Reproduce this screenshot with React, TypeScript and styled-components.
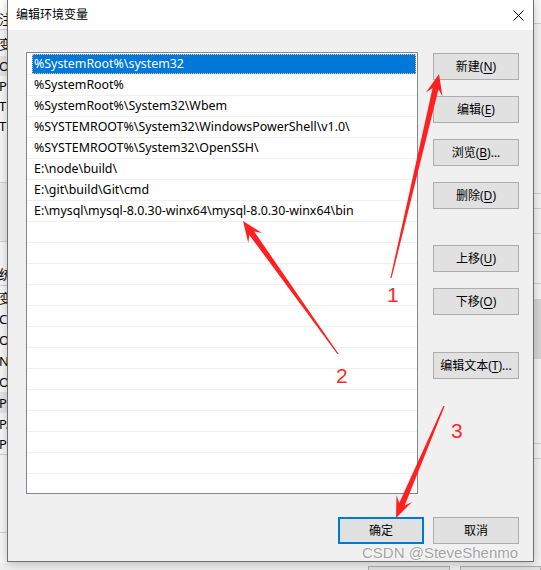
import React from 'react';
import styled, { createGlobalStyle } from 'styled-components';

const FONT = `"Noto Sans", "Noto Sans CJK SC", sans-serif`;

const GlobalStyle = createGlobalStyle`
  *, *::before, *::after { box-sizing: border-box; }
  html, body { margin: 0; padding: 0; background: #f0f0f0; }
  #root { width: 541px; height: 570px; }
`;

const Desktop = styled.div`
  position: relative;
  width: 541px;
  height: 570px;
  overflow: hidden;
  background: #f0f0f0;
  font-family: ${FONT};
  font-size: 12px;
  color: #000;
  display: flex;
  flex-direction: column;
`;

const BackUpper = styled.div`
  display: flex;
  height: 563px;
`;

const BackMiddle = styled.div`
  flex: 1;
`;

const LeftStrip = styled.div`
  width: 7px;
  overflow: hidden;
  background: #f7f7f7;
  display: flex;
  flex-direction: column;
`;

const RightStrip = styled.div`
  width: 8px;
  overflow: hidden;
  background: #f3f3f3;
  display: flex;
  flex-direction: column;
`;

const StripRow = styled.div<{ $h: number; $bg?: string; $line?: boolean }>`
  flex: 0 0 ${(p) => p.$h}px;
  background: ${(p) => p.$bg ?? 'transparent'};
  border-bottom: ${(p) => (p.$line ? '1px solid #cfcfcf' : '0')};
  display: flex;
  align-items: center;
  white-space: nowrap;
  font-size: 13px;
  margin-left: -1px;
`;

const BottomBar = styled.div`
  height: 7px;
  display: flex;
  gap: 10px;
  padding-left: 368px;
  padding-top: 3px;
`;

const BackButton = styled.div`
  width: 86px;
  height: 8px;
  border: 1px solid #adadad;
  border-bottom: 0;
  background: #e1e1e1;
`;

const Dialog = styled.div`
  position: absolute;
  left: 7px;
  top: -1px;
  width: 527px;
  height: 563px;
  border: 1px solid #707070;
  background: #f0f0f0;
  box-shadow: 0 2px 10px rgba(0, 0, 0, 0.22);
  display: flex;
  flex-direction: column;
`;

const TitleBar = styled.div`
  height: 30px;
  flex: 0 0 30px;
  background: #fff;
  display: flex;
  align-items: center;
  justify-content: space-between;
  padding: 0 9px 0 8px;
  font-size: 12px;
`;

const Title = styled.span`
  line-height: 16px;
`;

const CloseIcon = styled.svg`
  width: 11px;
  height: 11px;
`;

const Body = styled.div`
  flex: 1;
  display: grid;
  grid-template-columns: 392px 86px;
  grid-template-rows: 442px 27px;
  column-gap: 15px;
  row-gap: 23px;
  padding: 22px 14px 17px 18px;
`;

const List = styled.div`
  border: 1px solid #828790;
  background: #fff;
  padding-top: 1px;
  overflow: hidden;
`;

const Row = styled.div`
  height: 21px;
  border-bottom: 1px solid #f0f0f0;
  padding: 0 1px 0 5px;
  display: flex;
`;

const Cell = styled.div<{ $selected?: boolean }>`
  flex: 1;
  display: flex;
  align-items: center;
  padding-left: 2px;
  white-space: nowrap;
  font-size: 12.4px;
  line-height: 16px;
  background: ${(p) => (p.$selected ? '#0078d7' : 'transparent')};
  color: ${(p) => (p.$selected ? '#fff' : '#000')};
  outline: ${(p) => (p.$selected ? '1px dotted rgba(255, 214, 150, 0.9)' : 'none')};
  outline-offset: -1px;
`;

const ButtonColumn = styled.div`
  display: flex;
  flex-direction: column;
  gap: 16px;
  padding-top: 1px;
`;

const Button = styled.div<{ $default?: boolean; $space?: number }>`
  width: 86px;
  height: 27px;
  flex: none;
  margin-top: ${(p) => p.$space ?? 0}px;
  background: #e1e1e1;
  border: ${(p) => (p.$default ? '2px solid #0078d7' : '1px solid #adadad')};
  display: flex;
  align-items: center;
  justify-content: center;
  font-size: 12px;
  line-height: 16px;
  white-space: nowrap;
  u {
    text-decoration: underline;
    text-underline-offset: 2px;
  }
`;

const Footer = styled.div`
  grid-column: 1 / span 2;
  display: flex;
  justify-content: flex-end;
  gap: 9px;
`;

const Overlay = styled.svg`
  position: absolute;
  left: 0;
  top: 0;
  width: 541px;
  height: 570px;
  pointer-events: none;
`;

const Mark = styled.text`
  font-family: "Liberation Sans", Arial, sans-serif;
  font-size: 21px;
  fill: #ff2a2a;
`;

const Watermark = styled.span`
  position: absolute;
  left: 362px;
  top: 544px;
  font-family: "Liberation Sans", Arial, sans-serif;
  font-size: 15px;
  line-height: 17px;
  color: rgba(120, 120, 120, 0.7);
  text-shadow: 0 0 1px #fff, 0 0 2px #fff;
  white-space: nowrap;
  pointer-events: none;
`;

function arrow(t: [number, number], h: [number, number], headLen = 21, headW = 8.5) {
  const [tx, ty] = t;
  const [hx, hy] = h;
  const dx = hx - tx;
  const dy = hy - ty;
  const L = Math.hypot(dx, dy);
  const ux = dx / L;
  const uy = dy / L;
  const px = -uy;
  const py = ux;
  const neckW = 3;
  const tailW = 0.6;
  const neckBack = headLen - 6;
  const pt = (d: number, w: number) =>
    `${(tx + ux * d + px * w).toFixed(1)},${(ty + uy * d + py * w).toFixed(1)}`;
  return [
    pt(0, tailW),
    pt(L - neckBack, neckW),
    pt(L - headLen, headW),
    pt(L, 0),
    pt(L - headLen, -headW),
    pt(L - neckBack, -neckW),
    pt(0, -tailW),
  ].join(' ');
}

const paths = [
  '%SystemRoot%\\system32',
  '%SystemRoot%',
  '%SystemRoot%\\System32\\Wbem',
  '%SYSTEMROOT%\\System32\\WindowsPowerShell\\v1.0\\',
  '%SYSTEMROOT%\\System32\\OpenSSH\\',
  'E:\\node\\build\\',
  'E:\\git\\build\\Git\\cmd',
  'E:\\mysql\\mysql-8.0.30-winx64\\mysql-8.0.30-winx64\\bin',
];

const rows = [...paths, ...Array(13).fill('')];

const leftRows: { h: number; t?: string; bg?: string; line?: boolean }[] = [
  { h: 8, bg: '#fff' },
  { h: 22, t: '注', bg: '#fff', line: true },
  { h: 26, t: '变' },
  { h: 20, t: 'Or', bg: '#e5e5e5' },
  { h: 20, t: 'Pa' },
  { h: 20, t: 'TE' },
  { h: 20, t: 'TM' },
  { h: 47, line: true },
  { h: 59, bg: '#ececec', line: true },
  { h: 20 },
  { h: 24, t: '统', line: true },
  { h: 22, t: '变' },
  { h: 21, t: 'Co' },
  { h: 21, t: 'Or' },
  { h: 21, t: 'NU' },
  { h: 21, t: 'OS' },
  { h: 21, t: 'Pa', bg: '#e5e5e5' },
  { h: 21, t: 'PA' },
  { h: 21, t: 'PR', line: true },
  { h: 78, line: true },
];

const rightRows: { h: number; bg?: string; line?: boolean }[] = [
  { h: 24, bg: '#fafafa', line: true },
  { h: 170, line: true },
  { h: 15, line: true },
  { h: 25, line: true },
  { h: 50, line: true },
  { h: 15, bg: '#f3f3f3' },
  { h: 60, bg: '#d6d6d6' },
  { h: 85, line: true },
  { h: 15, line: true },
  { h: 80 },
];

export default function App() {
  return (
    <>
      <GlobalStyle />
      <Desktop>
        <BackUpper>
          <LeftStrip>
            {leftRows.map((r, i) => (
              <StripRow key={i} $h={r.h} $bg={r.bg} $line={r.line}>
                {r.t}
              </StripRow>
            ))}
          </LeftStrip>
          <BackMiddle />
          <RightStrip>
            {rightRows.map((r, i) => (
              <StripRow key={i} $h={r.h} $bg={r.bg} $line={r.line} />
            ))}
          </RightStrip>
        </BackUpper>
        <BottomBar>
          <BackButton />
          <BackButton />
        </BottomBar>

        <Dialog>
          <TitleBar>
            <Title>编辑环境变量</Title>
            <CloseIcon viewBox="0 0 11 11">
              <path d="M0.5 0.5 L10.5 10.5 M10.5 0.5 L0.5 10.5" stroke="#000" strokeWidth="1" fill="none" />
            </CloseIcon>
          </TitleBar>
          <Body>
            <List>
              {rows.map((p, i) => (
                <Row key={i}>
                  <Cell $selected={i === 0}>{p}</Cell>
                </Row>
              ))}
            </List>
            <ButtonColumn>
              <Button>新建(<u>N</u>)</Button>
              <Button>编辑(<u>E</u>)</Button>
              <Button>浏览(<u>B</u>)...</Button>
              <Button>删除(<u>D</u>)</Button>
              <Button $space={20}>上移(<u>U</u>)</Button>
              <Button>下移(<u>O</u>)</Button>
              <Button $space={21}>编辑文本(<u>T</u>)...</Button>
            </ButtonColumn>
            <Footer>
              <Button $default>确定</Button>
              <Button>取消</Button>
            </Footer>
          </Body>
        </Dialog>

        <Overlay viewBox="0 0 541 570">
          <polygon points={arrow([391, 278], [439, 74])} fill="#ff2020" />
          <polygon points={arrow([338, 354], [243, 221])} fill="#ff2020" />
          <polygon points={arrow([444, 406], [396, 518])} fill="#ff2020" />
          <Mark x={387} y={302}>1</Mark>
          <Mark x={336} y={383}>2</Mark>
          <Mark x={451} y={438}>3</Mark>
        </Overlay>
        <Watermark>CSDN @SteveShenmo</Watermark>
      </Desktop>
    </>
  );
}
